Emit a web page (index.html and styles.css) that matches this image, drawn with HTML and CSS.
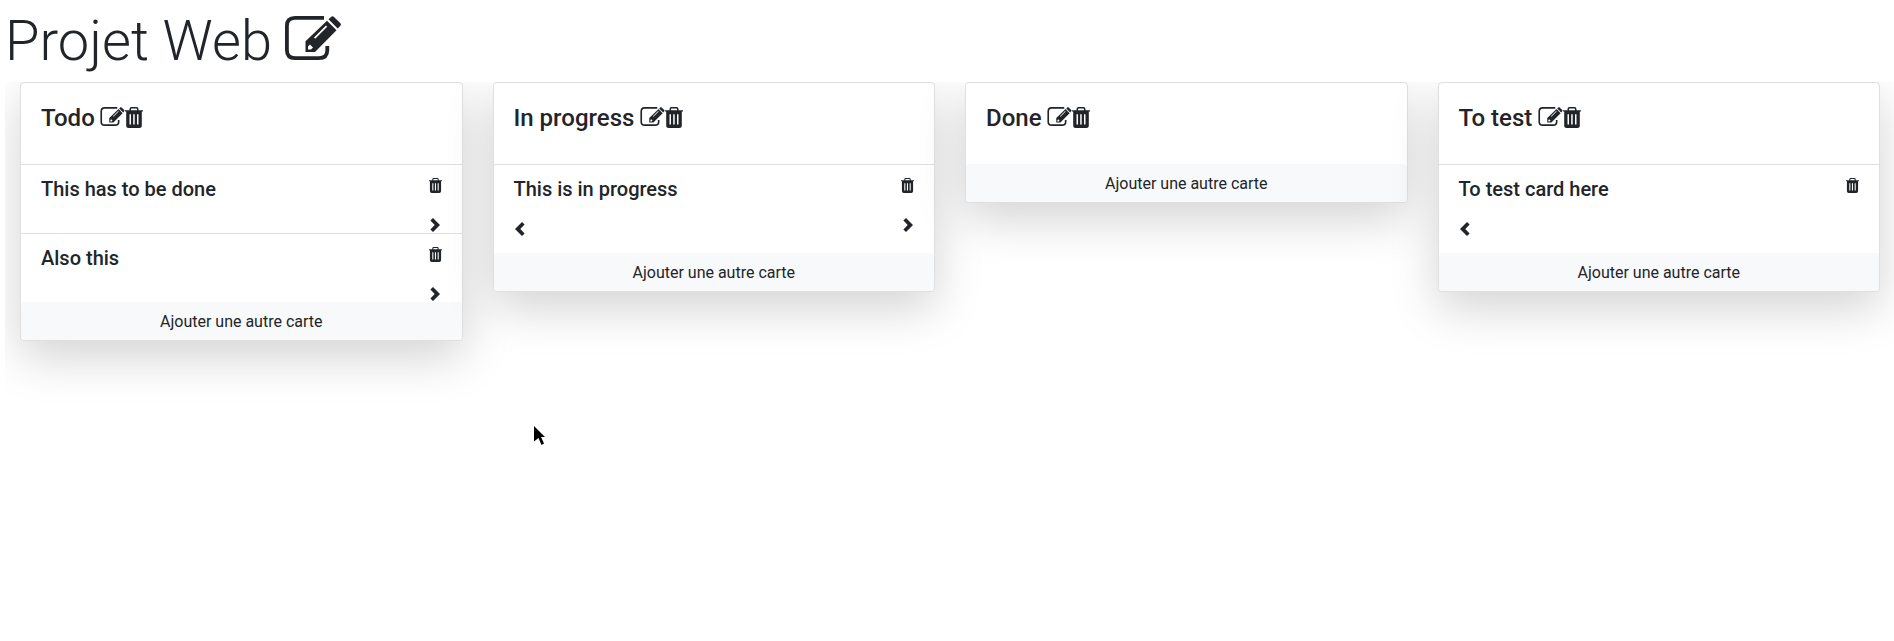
FILE: index.html
```
<!DOCTYPE html>
<html lang="fr">
<head>
<meta charset="utf-8">
<title>Projet Web</title>
<link rel="stylesheet" href="styles.css">
</head>
<body>
<svg class="sprite" aria-hidden="true">
  <symbol id="edit" viewBox="0 0 56 44">
    <path d="M39 1.900H10Q1.900 1.900 1.900 10V34Q1.900 42.100 10 42.100H34Q42.300 42.100 42.300 34V30" fill="none" stroke="currentColor" stroke-width="3.800"/>
    <path fill-rule="evenodd" d="M20.500 36V25.300L42 4.800L51.500 14.300L30 36ZM23 30.500V33.500H26L28 31.500L25 28.500ZM29 21.500L41 9.500L42.200 10.700L30.200 22.700Z"/>
    <path d="M43.500 3.300L46 .9Q47.500-.5 49 .9L55.200 7Q56.500 8.500 55.200 9.900L52.700 12.500Z"/>
  </symbol>
  <symbol id="trash" viewBox="0 0 18 21">
    <path fill-rule="evenodd" d="M0 3.200H4.500V2Q4.500 0 6.500 0H11.500Q13.500 0 13.500 2V3.200H18V4.600H16.800V18.500Q16.800 21 14.300 21H3.700Q1.200 21 1.200 18.500V4.600H0ZM6 3.200H12V2.200Q12 1.500 11.300 1.500H6.700Q6 1.500 6 2.200ZM4.500 7.200V17.500H6V7.200ZM8.200 7.200V17.500H9.700V7.200ZM12 7.200V17.500H13.500V7.200Z"/>
  </symbol>
  <symbol id="chevron" viewBox="0 0 10 14">
    <path d="M3 0L10 7L3 14L.4 11.400L4.700 7L.4 2.600Z"/>
  </symbol>
</svg>
<h1 class="title">Projet Web <svg class="title-edit"><use href="#edit"/></svg></h1>
<main class="board">
  <section class="column"><div class="list">
    <header class="list-head"><h4>Todo</h4><svg class="edit"><use href="#edit"/></svg><svg class="trash"><use href="#trash"/></svg></header>
    <article class="item"><h5>This has to be done</h5><div class="actions"><svg class="remove"><use href="#trash"/></svg><svg class="chevron"><use href="#chevron"/></svg></div></article>
    <article class="item"><h5>Also this</h5><div class="actions"><svg class="remove"><use href="#trash"/></svg><svg class="chevron"><use href="#chevron"/></svg></div></article>
    <footer class="add">Ajouter une autre carte</footer>
  </div></section>
  <section class="column"><div class="list">
    <header class="list-head"><h4>In progress</h4><svg class="edit"><use href="#edit"/></svg><svg class="trash"><use href="#trash"/></svg></header>
    <article class="item item-tall"><div><h5>This is in progress</h5><svg class="chevron back"><use href="#chevron"/></svg></div><div class="actions"><svg class="remove"><use href="#trash"/></svg><svg class="chevron"><use href="#chevron"/></svg></div></article>
    <footer class="add">Ajouter une autre carte</footer>
  </div></section>
  <section class="column"><div class="list">
    <header class="list-head"><h4>Done</h4><svg class="edit"><use href="#edit"/></svg><svg class="trash"><use href="#trash"/></svg></header>
    <footer class="add">Ajouter une autre carte</footer>
  </div></section>
  <section class="column"><div class="list">
    <header class="list-head"><h4>To test</h4><svg class="edit"><use href="#edit"/></svg><svg class="trash"><use href="#trash"/></svg></header>
    <article class="item item-tall"><div><h5>To test card here</h5><svg class="chevron back"><use href="#chevron"/></svg></div><div class="actions"><svg class="remove"><use href="#trash"/></svg></div></article>
    <footer class="add">Ajouter une autre carte</footer>
  </div></section>
</main>
<svg class="cursor" viewBox="0 0 11 19"><path d="M0 0L11 11H7L10 17.500L7.500 19L4.500 12L0 15.500Z" fill="#000"/></svg>
</body>
</html>
```
FILE: styles.css
```
* { box-sizing: border-box; }
body { margin: 0; padding: 8px 0 0 5px; overflow: hidden; background: #fff; color: #212529; font: 400 16px/1.5 Roboto, sans-serif; }
svg { fill: currentColor; flex: none; display: block; }
.sprite { position: absolute; width: 0; height: 0; }
h1, h4, h5 { margin: 0; line-height: 1.2; }
.title { display: flex; height: 67px; margin-bottom: 7px; font-size: 56px; font-weight: 300; white-space: pre; }
.title-edit { width: 56px; height: 44px; margin: 8px 0 0 -1px; }
.board { display: flex; align-items: flex-start; width: 1890px; height: 559px; overflow: hidden; }
.column { width: 25%; padding: 0 15px; }
.list { border: 1px solid #dfdfdf; border-radius: 4px; background: #fff; box-shadow: 0 16px 48px rgba(0, 0, 0, .175); }
.list-head { display: flex; height: 81px; padding: 21px 20px 0; }
h4 { font-size: 24px; font-weight: 500; }
.edit { width: 25px; height: 19px; margin: 3px 0 0 5.5px; }
.trash { width: 18px; height: 21px; margin-top: 3px; }
.item { display: flex; justify-content: space-between; height: 69px; padding: 12px 20px 0; border-top: 1px solid #dfdfdf; }
.item-tall { height: 89px; }
h5 { font-size: 20px; font-weight: 500; }
.actions { display: flex; flex-direction: column; align-items: center; gap: 25px; width: 13px; padding-top: 1px; }
.remove { width: 13px; height: 15px; }
.chevron { width: 10px; height: 14px; }
.back { margin: 21px 0 0 1px; transform: scaleX(-1); }
.add { height: 38px; padding-top: 8px; border-radius: 4px; background: #f8f9fa; text-align: center; }
.cursor { position: absolute; left: 534px; top: 426px; width: 11px; height: 19px; }
```
